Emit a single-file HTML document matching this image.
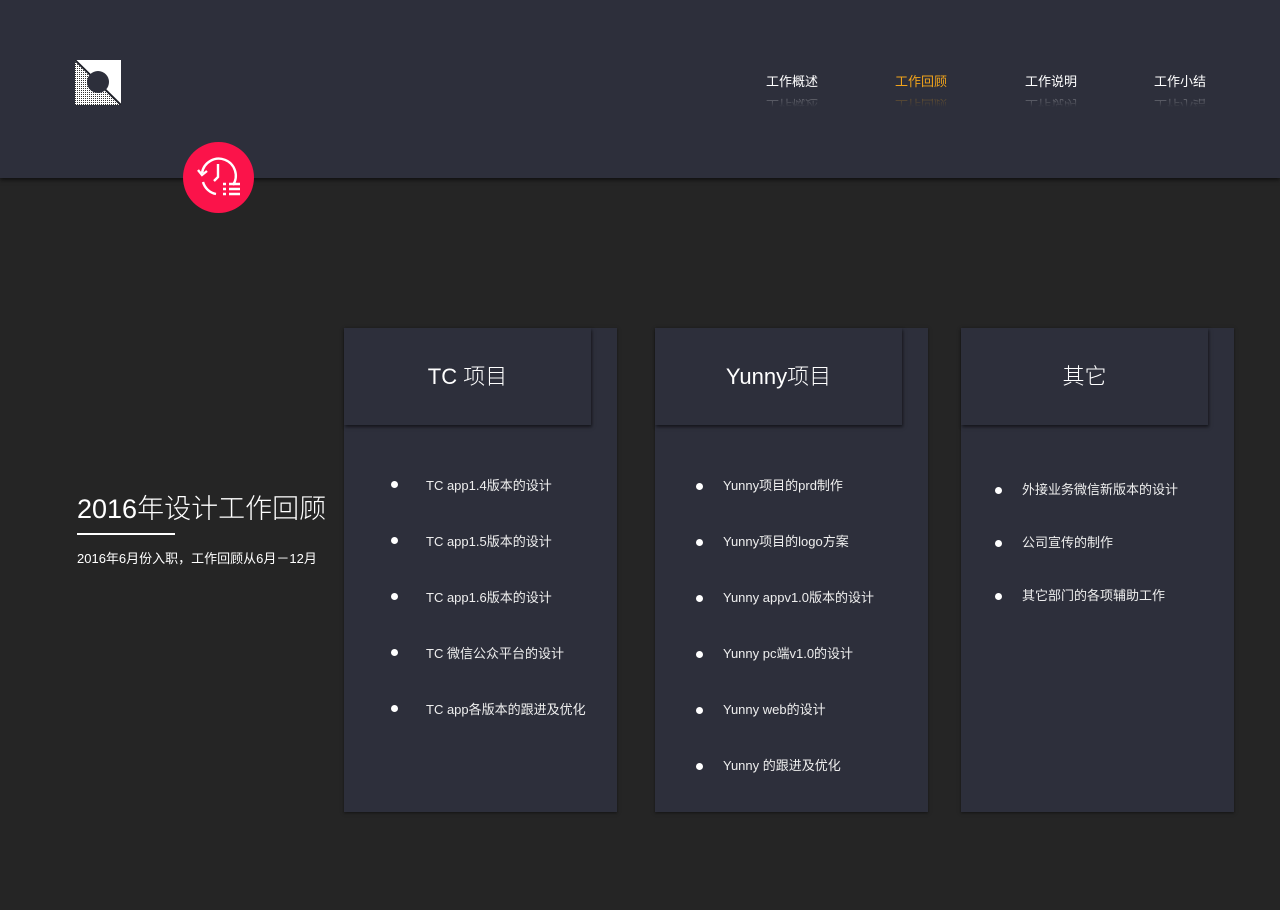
<!DOCTYPE html>
<html><head><meta charset="utf-8"><style>
*{margin:0;padding:0;box-sizing:border-box}
body{width:1280px;height:910px;background:#252525;font-family:"Liberation Sans","Noto Sans CJK SC",sans-serif;color:#fff;position:relative;overflow:hidden}
.top{position:absolute;left:0;top:0;width:1280px;height:178px;background:#2d2f3b;box-shadow:0 2px 4px rgba(0,0,0,.6)}
.nav{position:absolute;top:73px;font-size:13px;color:#fff}
.nav span{display:block;line-height:17px}
.nav .r{transform:scaleY(-1);opacity:.35;height:11px;margin-top:6px;overflow:hidden;line-height:17px;-webkit-mask-image:linear-gradient(to top,#000,transparent)}
.nav .rr{display:block;transform:translateY(-6px)}
.badge{position:absolute;left:183px;top:142px;width:71px;height:71px;border-radius:50%;background:#fb134a}
.card{position:absolute;top:328px;width:273px;height:484px;background:#2d2f3b;box-shadow:0 1px 3px rgba(0,0,0,.5)}
.hd{position:absolute;left:0;top:0;width:247px;height:97px;background:#2d2f3b;box-shadow:1px 2px 3px rgba(0,0,0,.55);font-size:22px;text-align:center;line-height:97px;font-weight:300}
.it{position:absolute;font-size:13px;color:#eee}
.it:before{content:"";position:absolute;left:-35px;top:6px;width:7px;height:7px;border-radius:50%;background:#fff}
.c2 .it:before,.c3 .it:before{left:-27px;top:8px}
</style></head><body>
<div class="top">
<svg style="position:absolute;left:75px;top:60px" width="46" height="45" viewBox="0 0 46 45">
<defs><pattern id="d" width="2" height="2" patternUnits="userSpaceOnUse"><rect width="2" height="2" fill="#fff"/><rect width="1" height="1" fill="#333"/></pattern></defs>
<rect x="0" y="0" width="46" height="45" fill="#fff"/>
<polygon points="0,0 46,45 0,45" fill="url(#d)"/>
<line x1="0" y1="0" x2="46" y2="45" stroke="#1d1f28" stroke-width="2"/>
<circle cx="23" cy="22" r="11" fill="#2d2f3b"/>
</svg>
<div class="nav" style="left:766px"><span>工作概述</span><div class="r"><span class="rr">工作概述</span></div></div>
<div class="nav" style="left:895px;color:#f0a31b"><span>工作回顾</span><div class="r"><span class="rr">工作回顾</span></div></div>
<div class="nav" style="left:1025px"><span>工作说明</span><div class="r"><span class="rr">工作说明</span></div></div>
<div class="nav" style="left:1154px"><span>工作小结</span><div class="r"><span class="rr">工作小结</span></div></div>
</div>
<div class="badge"><svg width="71" height="71" viewBox="0 0 71 71" fill="none" stroke="#fff" stroke-width="2.4">
<path d="M19 31 A17 17 0 1 1 50 43"/>
<path d="M20 40 A17 17 0 0 0 33 52"/>
<path d="M15 28 L19 33 L24 29"/>
<path d="M35 22 V35 L31 39"/>
<path d="M40 42h3M46 42h11M40 47h3M46 47h11M40 52h3M46 52h11"/>
</svg></div>
<div style="position:absolute;left:77px;top:487px;font-size:27px;font-weight:300">2016年设计工作回顾</div>
<div style="position:absolute;left:77px;top:533px;width:98px;height:2px;background:#fff"></div>
<div style="position:absolute;left:77px;top:548px;font-size:13px">2016年6月份入职，工作回顾从6月－12月</div>

<div class="card" style="left:344px"><div class="hd">TC 项目</div>
<div class="it" style="left:82px;top:147px">TC app1.4版本的设计</div>
<div class="it" style="left:82px;top:203px">TC app1.5版本的设计</div>
<div class="it" style="left:82px;top:259px">TC app1.6版本的设计</div>
<div class="it" style="left:82px;top:315px">TC 微信公众平台的设计</div>
<div class="it" style="left:82px;top:371px">TC app各版本的跟进及优化</div>
</div>
<div class="card c2" style="left:655px"><div class="hd">Yunny项目</div>
<div class="it" style="left:68px;top:147px">Yunny项目的prd制作</div>
<div class="it" style="left:68px;top:203px">Yunny项目的logo方案</div>
<div class="it" style="left:68px;top:259px">Yunny appv1.0版本的设计</div>
<div class="it" style="left:68px;top:315px">Yunny pc端v1.0的设计</div>
<div class="it" style="left:68px;top:371px">Yunny web的设计</div>
<div class="it" style="left:68px;top:427px">Yunny 的跟进及优化</div>
</div>
<div class="card c3" style="left:961px"><div class="hd">其它</div>
<div class="it" style="left:61px;top:151px">外接业务微信新版本的设计</div>
<div class="it" style="left:61px;top:204px">公司宣传的制作</div>
<div class="it" style="left:61px;top:257px">其它部门的各项辅助工作</div>
</div>
</body></html>
